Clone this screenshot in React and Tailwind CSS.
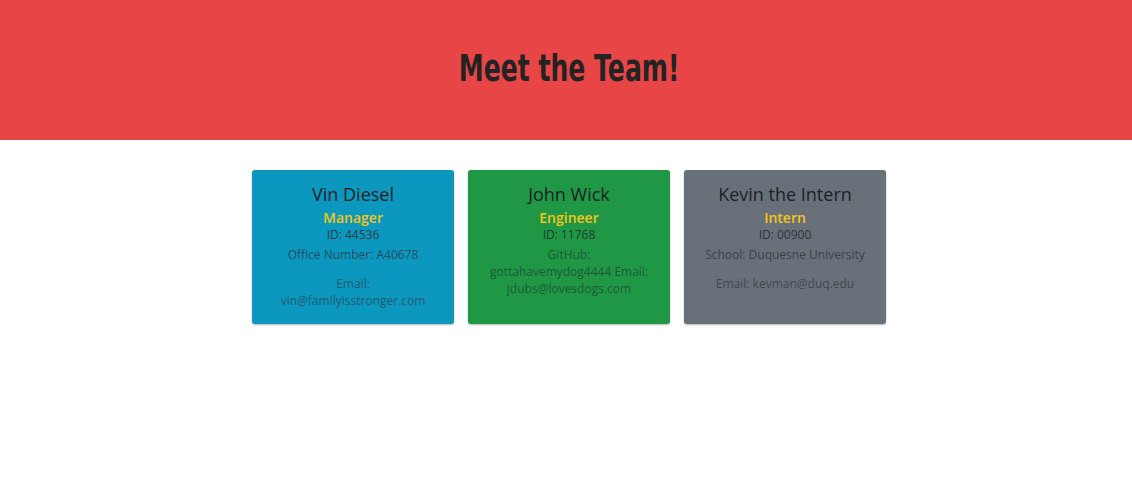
export default function App() {
  const cards = [
    {
      name: "Vin Diesel",
      role: "Manager",
      bg: "bg-[#0c97be]",
      id: "44536",
      extra: "Office Number: A40678",
      email: ["Email:", "vin@familyisstronger.com"],
    },
    {
      name: "John Wick",
      role: "Engineer",
      bg: "bg-[#1f9745]",
      id: "11768",
      combined: ["GitHub:", "gottahavemydog4444 Email:", "jdubs@lovesdogs.com"],
    },
    {
      name: "Kevin the Intern",
      role: "Intern",
      bg: "bg-[#68717a]",
      id: "00900",
      extra: "School: Duquesne University",
      email: ["Email: kevman@duq.edu"],
    },
  ];
  return (
    <div className="min-h-[496px] w-full bg-white" style={{ fontFamily: '"Open Sans", "Noto Sans", sans-serif' }}>
      <header className="h-[140px] bg-[#e84646] flex items-center justify-center">
        <h1
          className="inline-block text-[38px] font-bold text-[#232323] mt-[-3px] ml-[6px] scale-x-[0.66]"
          style={{ fontFamily: '"DejaVu Sans", sans-serif' }}
        >
          Meet the Team!
        </h1>
      </header>
      <main className="flex justify-center gap-[14px] pt-[30px] pl-[6px]">
        {cards.map((c) => (
          <div
            key={c.name}
            className={`${c.bg} w-[202px] h-[154px] rounded-[3px] shadow-[0_1px_2px_rgba(0,0,0,0.3)] flex flex-col items-center text-center px-[10px] pt-[13px]`}
          >
            <div className="text-[18px] leading-[22px] text-[#1c2226]">{c.name}</div>
            <div className="text-[14px] leading-[18px] font-semibold text-[#f5c518] mt-[4px]">{c.role}</div>
            <div className="text-[12px] leading-[15px] text-[#1c2226]/80">ID: {c.id}</div>
            {c.combined ? (
              <p className="text-[12px] leading-[17px] text-[#1c2226]/55 mt-[4px]">
                {c.combined.map((l, i) => (
                  <span key={i} className="block">{l}</span>
                ))}
              </p>
            ) : (
              <>
                <p className="text-[12px] leading-[17px] text-[#1c2226]/65 mt-[4px]">{c.extra}</p>
                <p className="text-[12px] leading-[17px] text-[#1c2226]/55 mt-[12px]">
                  {c.email.map((l, i) => (
                    <span key={i} className="block">{l}</span>
                  ))}
                </p>
              </>
            )}
          </div>
        ))}
      </main>
    </div>
  );
}
